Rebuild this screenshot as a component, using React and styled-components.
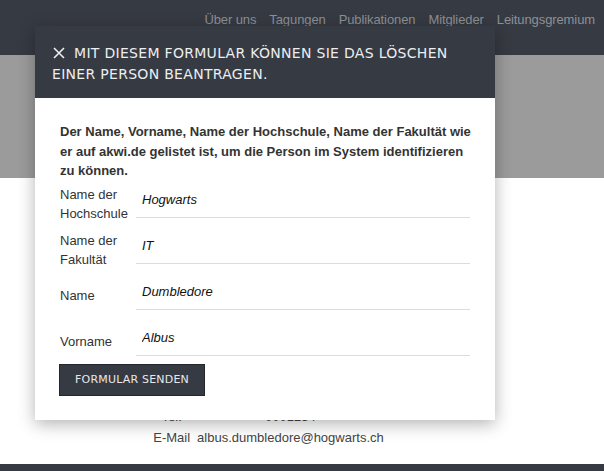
import React from 'react';
import styled, { createGlobalStyle } from 'styled-components';

const GlobalStyle = createGlobalStyle`
  * { box-sizing: border-box; }
  html, body { margin: 0; padding: 0; }
  body {
    font-family: "Liberation Sans", Arial, sans-serif;
    background: #fff;
    color: #333;
    width: 604px;
    height: 471px;
    overflow: hidden;
  }
`;

const Page = styled.div`
  position: relative;
  width: 604px;
  height: 471px;
  display: flex;
  flex-direction: column;
`;

const TopBar = styled.header`
  height: 55px;
  background: #363a42;
  display: flex;
  justify-content: flex-end;
  align-items: flex-start;
  padding: 11px 9px 0 0;
`;

const NavLink = styled.a`
  font-size: 13px;
  line-height: 17px;
  letter-spacing: -0.1px;
  color: #8d9097;
  margin-left: 13px;
  text-decoration: none;
`;

const Banner = styled.div`
  height: 123px;
  background: #9b9b9b;
`;

const Content = styled.main`
  flex: 1;
  display: flex;
  flex-direction: column;
  justify-content: flex-end;
  align-items: center;
  padding: 0 67px 16px 0;
`;

const InfoTable = styled.table`
  border-collapse: collapse;
  font-size: 13px;
  color: #444;
`;

const InfoCell = styled.td`
  padding: 2px 3.5px;
  line-height: 17px;
  text-align: center;
`;

const Footer = styled.footer`
  height: 7px;
  background: #363a42;
`;

const Modal = styled.div`
  position: absolute;
  top: 26px;
  left: 35px;
  width: 460px;
  background: #fff;
  box-shadow: 0 4px 16px rgba(0, 0, 0, 0.3);
`;

const ModalHead = styled.div`
  height: 72px;
  background: #363a42;
  padding: 17px 17px 0;
  font-family: "DejaVu Sans", sans-serif;
  font-size: 14px;
  line-height: 21px;
  letter-spacing: 0.3px;
  color: #eceef0;
  text-transform: uppercase;
`;

const CloseIcon = styled.svg`
  display: inline-block;
  width: 12px;
  height: 12px;
  margin: 0 9px 0 1px;
  vertical-align: -1px;
`;

const ModalBody = styled.div`
  padding: 24px 12px 24px 25px;
`;

const Intro = styled.p`
  margin: 0 8px 1px 0;
  font-size: 13px;
  font-weight: bold;
  line-height: 19.5px;
  color: #333;
`;

const FieldRow = styled.div`
  display: flex;
  align-items: center;
  height: 36px;
  margin-bottom: 10px;
`;

const FieldLabel = styled.label`
  width: 76px;
  flex: none;
  padding-top: 8px;
  font-size: 13px;
  line-height: 19px;
  color: #333;
`;

const FieldInput = styled.input`
  width: 334px;
  height: 36px;
  border: none;
  border-bottom: 1px solid #dcdcdc;
  padding: 0 6px;
  font-family: "Liberation Sans", Arial, sans-serif;
  font-size: 13px;
  font-style: italic;
  color: #111;
  outline: none;
  background: transparent;
`;

const SubmitButton = styled.button`
  display: block;
  margin: -2px 0 0 -1px;
  height: 32px;
  padding: 0 15px;
  background: #363a42;
  border: 1px solid #23262b;
  color: #e6e8ea;
  font-family: "DejaVu Sans", sans-serif;
  font-size: 11px;
  letter-spacing: 0.2px;
  text-transform: uppercase;
  cursor: pointer;
`;

const navItems = ['Über uns', 'Tagungen', 'Publikationen', 'Mitglieder', 'Leitungsgremium'];

const fields = [
  { label: 'Name der Hochschule', value: 'Hogwarts' },
  { label: 'Name der Fakultät', value: 'IT' },
  { label: 'Name', value: 'Dumbledore' },
  { label: 'Vorname', value: 'Albus' },
];

const info = [
  ['Tel.', '0001234'],
  ['E-Mail', 'albus.dumbledore@hogwarts.ch'],
];

export default function App() {
  return (
    <>
      <GlobalStyle />
      <Page>
        <TopBar>
          {navItems.map((n) => (
            <NavLink key={n}>{n}</NavLink>
          ))}
        </TopBar>
        <Banner />
        <Content>
          <InfoTable>
            <tbody>
              {info.map(([k, v]) => (
                <tr key={k}>
                  <InfoCell>{k}</InfoCell>
                  <InfoCell>{v}</InfoCell>
                </tr>
              ))}
            </tbody>
          </InfoTable>
        </Content>
        <Footer />

        <Modal>
          <ModalHead>
            <CloseIcon viewBox="0 0 12 12">
              <path d="M1 1 L11 11 M11 1 L1 11" stroke="#eceef0" strokeWidth="1.6" fill="none" />
            </CloseIcon>
            Mit diesem Formular können Sie das Löschen einer Person beantragen.
          </ModalHead>
          <ModalBody>
            <Intro>
              Der Name, Vorname, Name der Hochschule, Name der Fakultät wie er auf akwi.de gelistet ist, um die
              Person im System identifizieren zu können.
            </Intro>
            {fields.map((f) => (
              <FieldRow key={f.label}>
                <FieldLabel>{f.label}</FieldLabel>
                <FieldInput defaultValue={f.value} />
              </FieldRow>
            ))}
            <SubmitButton>Formular senden</SubmitButton>
          </ModalBody>
        </Modal>
      </Page>
    </>
  );
}
